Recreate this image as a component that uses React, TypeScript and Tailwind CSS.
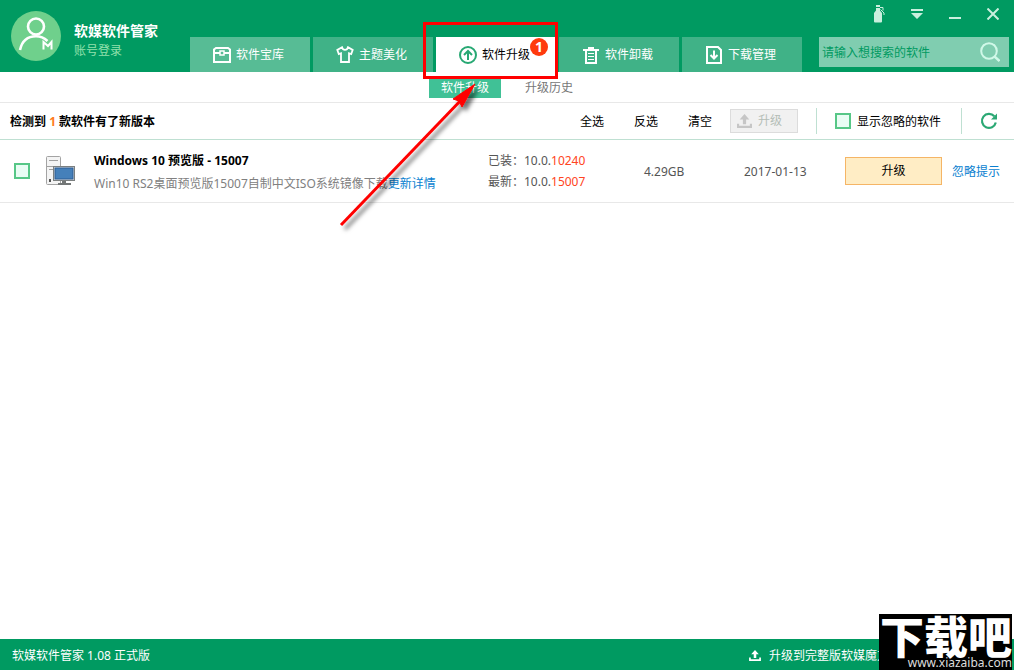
import React from "react";

const stroke = {
  fill: "none",
  stroke: "currentColor",
  strokeWidth: 2,
} as const;

function ChestIcon() {
  return (
    <svg viewBox="0 0 18 18" className="size-[18px] shrink-0" {...stroke}>
      <path d="M1 16V3.500L3 2h12l2 1.500V16z" />
      <path d="M1 7h6M11 7h6" />
      <rect x="7" y="5" width="4" height="4" strokeWidth="1.500" />
    </svg>
  );
}

function ShirtIcon() {
  return (
    <svg viewBox="0 0 18 18" className="size-[18px] shrink-0" {...stroke} strokeWidth={1.8}>
      <path d="M6 1.200 1.300 4l1.500 4L5 7.200V16h8V7.200l2.200.8 1.500-4L12 1.200C11.500 3 10.500 3.800 9 3.800S6.500 3 6 1.200z" />
    </svg>
  );
}

function UpCircleIcon() {
  return (
    <svg viewBox="0 0 18 18" className="size-[18px] shrink-0 text-[#27a873]" {...stroke}>
      <circle cx="9" cy="9" r="8" />
      <path d="M9 14V5M5 9l4-4 4 4" />
    </svg>
  );
}

function TrashIcon() {
  return (
    <svg viewBox="0 0 18 18" className="size-[18px] shrink-0" {...stroke}>
      <path d="M1 4h16M6 2h6M4 4v13h10V4" />
      <path d="M6 7.500h6M6 10.500h6M6 13.500h6" strokeWidth="1" />
    </svg>
  );
}

function DownloadIcon() {
  return (
    <svg viewBox="0 0 18 18" className="size-[18px] shrink-0" {...stroke}>
      <path d="M2 1h11l3 3v13H2z" />
      <path d="M9 4.500v8M5.500 9 9 12.500 12.500 9" />
    </svg>
  );
}

function UploadIcon({ className }: { className: string }) {
  return (
    <svg viewBox="0 0 14 13" className={className} fill="currentColor">
      <path d="M7 0 2.500 5H5.500v4.500h3V5h3zM0 9h2v2h10V9h2v4H0z" />
    </svg>
  );
}

function UserIcon() {
  return (
    <svg viewBox="0 0 50 50" className="size-[50px]">
      <circle cx="25" cy="25" r="25" fill="#6fd08c" />
      <g fill="none" stroke="#fff" strokeWidth="2.600">
        <circle cx="25" cy="15.500" r="8" />
        <path d="M9 39c2-9 8-13.700 16-13.700 4.500 0 8 1.500 11.500 4.700" />
        <path d="M32.500 38.500V31l4.500 4 3.500-4v7.500" strokeWidth="2" />
      </g>
    </svg>
  );
}

function ComputerIcon() {
  return (
    <svg viewBox="0 0 30 30" className="size-[30px]">
      <rect x="0.500" y="0.500" width="14" height="28" rx="1" fill="#f4f4f4" stroke="#a3a3a3" />
      <path d="M3 4.500h9M1 10.500h13M3 13.500h5" stroke="#a0a0a0" />
      <rect x="3" y="23" width="2" height="3" fill="#555" />
      <rect x="7.500" y="10.500" width="21" height="14" fill="#dcdcdc" stroke="#7c8080" />
      <rect x="9" y="12" width="18" height="11" fill="#4580ba" stroke="#2c5d94" />
      <path d="M16 25h4v2h5v2H12v-2h4z" fill="#737777" />
    </svg>
  );
}

function SprayIcon() {
  return (
    <svg viewBox="0 0 14 18" className="h-[18px] w-[14px]" fill="currentColor">
      <path d="M4 0h4v2H4zM4 3h4v2.500L10 8v8.500Q10 17.500 9 17.500H3Q2 17.500 2 16.500V8l2-2.500z" />
      <path d="M8 2.500h3v3M8.500 4.500 12 8v2" fill="none" stroke="currentColor" />
    </svg>
  );
}

function Check({ id, label }: { id: string; label: string }) {
  return (
    <input
      id={id}
      type="checkbox"
      aria-label={label}
      className="block size-4 shrink-0 appearance-none border-2 border-[#57c787] bg-[#e9fdf4] checked:bg-[#57c787]"
    />
  );
}

const tabs = [
  { label: "软件宝库", icon: <ChestIcon />, style: "bg-[#57bc95] text-white" },
  { label: "主题美化", icon: <ShirtIcon />, style: "bg-[#40b287] text-white" },
  { label: "软件升级", icon: <UpCircleIcon />, style: "bg-white text-black", badge: 1 },
  { label: "软件卸载", icon: <TrashIcon />, style: "bg-[#40b287] text-white" },
  { label: "下载管理", icon: <DownloadIcon />, style: "bg-[#40b287] text-white" },
];

function Header() {
  return (
    <header className="flex h-[72px] items-end bg-[#009a61]">
      <div className="flex w-[190px] shrink-0 gap-[13px] self-start pt-[11px] pl-[11px]">
        <UserIcon />
        <div className="pt-[10px]">
          <div className="text-sm leading-5 font-bold whitespace-nowrap text-white">软媒软件管家</div>
          <a href="#account" className="block leading-5 text-[#92e0ac]">账号登录</a>
        </div>
      </div>
      <nav className="flex shrink-0 gap-[3px]">
        {tabs.map((tab) => (
          <button
            key={tab.label}
            type="button"
            className={`relative flex h-[35px] w-[120px] items-center gap-[5px] pl-[23px] ${tab.style}`}
          >
            {tab.icon}
            {tab.label}
            {tab.badge && (
              <span className="absolute top-px right-2 flex size-[18px] items-center justify-center rounded-full bg-[#ff3a0d] text-sm font-bold text-white">
                {tab.badge}
              </span>
            )}
          </button>
        ))}
      </nav>
      <div className="ml-auto flex w-[195px] flex-col self-stretch">
        <div className="flex h-7 justify-end pr-[2px] text-[#c9efde]">
          <button type="button" aria-label="皮肤" className="flex w-[38px] items-center justify-center">
            <SprayIcon />
          </button>
          <button type="button" aria-label="菜单" className="flex w-[38px] items-center justify-center">
            <svg viewBox="0 0 12 10" className="h-[10px] w-3" fill="currentColor">
              <path d="M0 0h12v2H0zM0 4h12L6 10z" />
            </svg>
          </button>
          <button type="button" aria-label="最小化" className="flex w-[38px] items-center justify-center pt-2">
            <svg viewBox="0 0 12 2" className="h-[2px] w-3" fill="currentColor">
              <path d="M0 0h12v2H0z" />
            </svg>
          </button>
          <button type="button" aria-label="关闭" className="flex w-[38px] items-center justify-center">
            <svg viewBox="0 0 12 12" className="size-3" {...stroke}>
              <path d="M.5.5l11 11M11.500.5l-11 11" />
            </svg>
          </button>
        </div>
        <div className="mt-[9px] mr-[5px] flex h-[30px] items-center bg-[#80cdb0] pr-[9px] pl-[3px]">
          <input
            type="text"
            aria-label="搜索软件"
            placeholder="请输入想搜索的软件"
            className="min-w-0 flex-1 bg-transparent pt-[2px] text-[#006b43] outline-none placeholder:text-[#009a61]"
          />
          <button type="button" aria-label="搜索" className="text-[#d0f8e8]">
            <svg viewBox="0 0 20 20" className="size-5" {...stroke}>
              <circle cx="9" cy="9" r="7.800" />
              <path d="M14.500 14.500l5 4.500" strokeWidth="2.400" />
            </svg>
          </button>
        </div>
      </div>
    </header>
  );
}

function Toolbar() {
  return (
    <div className="flex h-[37px] items-center border-b border-[#bfe0d2] pr-4 pl-[10px]">
      <h1 className="pt-[2px] font-bold">
        检测到 <span className="text-[#ff7a1a]">1</span> 款软件有了新版本
      </h1>
      <div className="ml-auto flex items-center">
        <div className="flex gap-[30px] pt-[2px]">
          <button type="button">全选</button>
          <button type="button">反选</button>
          <button type="button">清空</button>
        </div>
        <button
          type="button"
          disabled
          className="ml-[18px] flex h-6 w-[68px] items-center gap-1.5 border border-[#dcdcdc] bg-[#f1f1f1] pl-1.5 text-[#b4bdb6]"
        >
          <UploadIcon className="h-[14px] w-[15px] text-[#c6c6c6]" />
          升级
        </button>
        <div className="ml-[18px] flex h-[26px] w-[146px] items-center gap-1.5 border-x border-[#bfe0d2] pl-[18px]">
          <Check id="show-ignored" label="显示忽略的软件" />
          <label htmlFor="show-ignored" className="pt-[2px]">显示忽略的软件</label>
        </div>
        <button type="button" aria-label="刷新" className="ml-[18px] text-[#2ba874]">
          <svg viewBox="0 0 18 18" className="size-[18px]" {...stroke}>
            <path d="M14.300 4.300A7 7 0 1 0 15.800 10.500" strokeWidth="2.200" />
            <path d="M17 1.500v6h-6z" fill="currentColor" stroke="none" />
          </svg>
        </button>
      </div>
    </div>
  );
}

function Updates() {
  return (
    <table className="w-full table-fixed border-separate border-spacing-0">
      <colgroup>
        <col className="w-[46px]" />
        <col className="w-12" />
        <col />
        <col className="w-[156px]" />
        <col className="w-[100px]" />
        <col className="w-[101px]" />
        <col className="w-[169px]" />
      </colgroup>
      <tbody>
        <tr className="h-[63px] text-[#555] *:border-b *:border-[#e8e8e8]">
          <td className="pl-[14px]">
            <Check id="pick-windows" label="选择 Windows 10 预览版" />
          </td>
          <td>
            <ComputerIcon />
          </td>
          <td className="pt-[2px] whitespace-nowrap">
            <div className="mb-[3px] leading-5 font-bold text-black">Windows 10 预览版 - 15007</div>
            <div className="leading-5 text-[#808080]">
              Win10 RS2桌面预览版15007自制中文ISO系统镜像下载
              <a href="#details" className="text-[#0a7fd0]">更新详情</a>
            </div>
          </td>
          <td className="leading-[21px]">
            <div>已装：10.0.<span className="text-[#ff4422]">10240</span></div>
            <div>最新：10.0.<span className="text-[#ff4422]">15007</span></div>
          </td>
          <td className="pt-[2px]">4.29GB</td>
          <td className="pt-[2px]">2017-01-13</td>
          <td>
            <div className="flex items-center gap-[10px]">
              <button type="button" className="h-7 w-[97px] border border-[#f5b566] bg-[#ffedc5] text-black">
                升级
              </button>
              <a href="#ignore" className="pt-[2px] text-[#0a7fd0]">忽略提示</a>
            </div>
          </td>
        </tr>
      </tbody>
    </table>
  );
}

function Annotation() {
  return (
    <svg
      viewBox="0 0 260 220"
      className="pointer-events-none absolute top-[20px] left-[320px] h-[220px] w-[260px]"
      fill="none"
    >
      <defs>
        <filter id="arrow-shadow" x="-20%" y="-20%" width="150%" height="150%">
          <feDropShadow dx="4" dy="4" stdDeviation="2" floodColor="#000" floodOpacity="0.55" />
        </filter>
      </defs>
      <rect x="104.500" y="3.500" width="132" height="54" stroke="#ff0000" strokeWidth="3" />
      <g filter="url(#arrow-shadow)">
        <path d="M21 205 144 77" stroke="#ff0000" strokeWidth="3" />
        <path d="M155 64 133 79l6 2 3 6z" fill="#ff0000" stroke="#ff0000" />
      </g>
    </svg>
  );
}

export default function App() {
  return (
    <div className="relative flex min-h-screen flex-col overflow-hidden bg-white font-['Noto_Sans','Noto_Sans_CJK_SC',sans-serif] text-xs text-black">
      <Header />
      <nav className="flex h-[31px] items-end gap-3 border-b border-[#e8e8e8] pb-1 pl-[429px]">
        <button type="button" className="h-5 bg-[#40c196] px-3 text-white">软件升级</button>
        <button type="button" className="h-5 px-3 text-[#777]">升级历史</button>
      </nav>
      <Toolbar />
      <main className="flex-1">
        <Updates />
      </main>
      <footer className="flex h-[31px] items-center justify-between bg-[#009a61] pt-[2px] pr-[125px] pl-3 text-white">
        <span>软媒软件管家 1.08 正式版</span>
        <a href="#full" className="flex items-center gap-[7px]">
          <UploadIcon className="h-[11px] w-[14px]" />
          升级到完整版软媒魔方
        </a>
      </footer>
      <Annotation />
      <div className="absolute right-[2px] bottom-0 flex h-14 w-[133px] flex-col items-end bg-black text-white">
        <span className="font-['Noto_Sans_CJK_SC',sans-serif] text-[44px] leading-[42px] font-black whitespace-nowrap">
          下载吧
        </span>
        <span className="leading-[14px] text-[#ddd]">www.xiazaiba.com</span>
      </div>
    </div>
  );
}
